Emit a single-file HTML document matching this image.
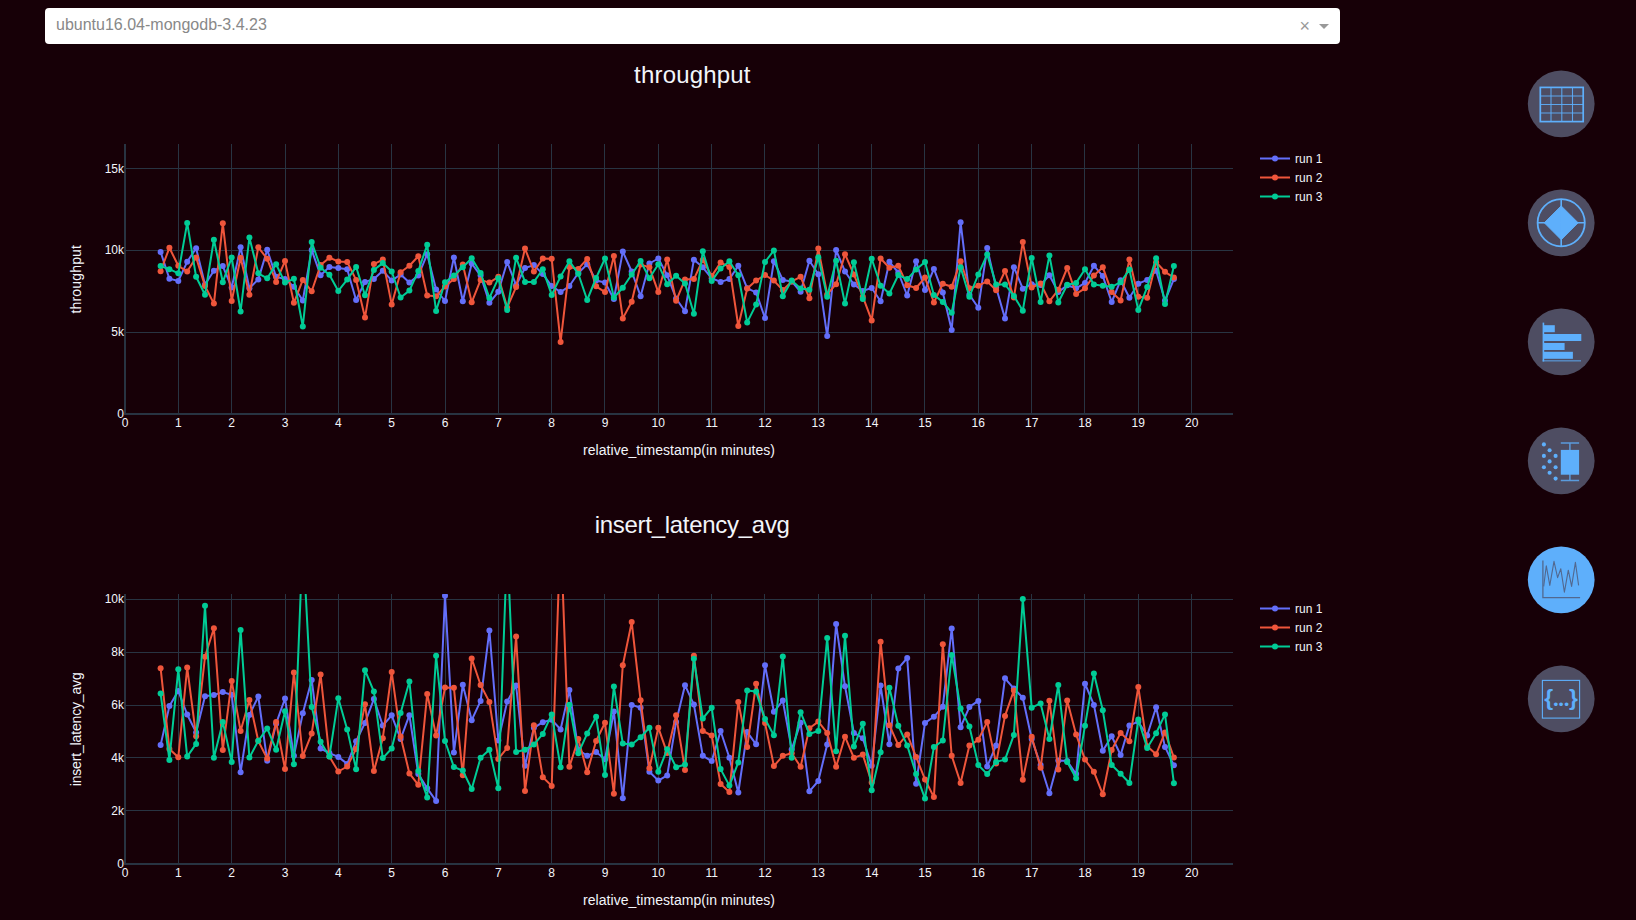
<!DOCTYPE html>
<html><head><meta charset="utf-8"><title>dashboard</title>
<style>
html,body{margin:0;padding:0;background:#170007;width:1636px;height:920px;overflow:hidden}
body{position:relative;font-family:"Liberation Sans",sans-serif}
#dd{position:absolute;left:45px;top:8px;width:1295px;height:35.7px;background:#fff;border-radius:4px;box-sizing:border-box}
#dd .v{position:absolute;left:11px;top:0;line-height:34px;font-size:16px;color:#888;white-space:nowrap}
#dd .x{position:absolute;left:1254.5px;top:0;line-height:37.4px;font-size:18px;color:#999}
#dd .a{position:absolute;left:1274px;top:16px;width:0;height:0;border-left:5px solid transparent;border-right:5px solid transparent;border-top:5px solid #999}
svg{position:absolute;left:0;top:0}
.tk{font-size:12px;fill:#f2f5fa}
.ax{font-size:14px;fill:#f2f5fa}
.tt{font-size:24px;fill:#f2f5fa}
.br{font-size:22.8px;font-weight:bold}
.dots{font-size:13.5px;letter-spacing:0.65px}
</style></head><body>
<div id="dd"><span class="v">ubuntu16.04-mongodb-3.4.23</span><span class="x">×</span><span class="a"></span></div>
<svg width="1636" height="920" viewBox="0 0 1636 920" font-family="Liberation Sans, sans-serif">
<clipPath id="cp1"><rect x="125.0" y="144" width="1108.0" height="270"/></clipPath>
<line x1="178.5" x2="178.5" y1="144" y2="414" stroke="#283442" stroke-width="1" shape-rendering="crispEdges"/>
<line x1="231.5" x2="231.5" y1="144" y2="414" stroke="#283442" stroke-width="1" shape-rendering="crispEdges"/>
<line x1="285.5" x2="285.5" y1="144" y2="414" stroke="#283442" stroke-width="1" shape-rendering="crispEdges"/>
<line x1="338.5" x2="338.5" y1="144" y2="414" stroke="#283442" stroke-width="1" shape-rendering="crispEdges"/>
<line x1="391.5" x2="391.5" y1="144" y2="414" stroke="#283442" stroke-width="1" shape-rendering="crispEdges"/>
<line x1="445.5" x2="445.5" y1="144" y2="414" stroke="#283442" stroke-width="1" shape-rendering="crispEdges"/>
<line x1="498.5" x2="498.5" y1="144" y2="414" stroke="#283442" stroke-width="1" shape-rendering="crispEdges"/>
<line x1="551.5" x2="551.5" y1="144" y2="414" stroke="#283442" stroke-width="1" shape-rendering="crispEdges"/>
<line x1="604.5" x2="604.5" y1="144" y2="414" stroke="#283442" stroke-width="1" shape-rendering="crispEdges"/>
<line x1="658.5" x2="658.5" y1="144" y2="414" stroke="#283442" stroke-width="1" shape-rendering="crispEdges"/>
<line x1="711.5" x2="711.5" y1="144" y2="414" stroke="#283442" stroke-width="1" shape-rendering="crispEdges"/>
<line x1="764.5" x2="764.5" y1="144" y2="414" stroke="#283442" stroke-width="1" shape-rendering="crispEdges"/>
<line x1="818.5" x2="818.5" y1="144" y2="414" stroke="#283442" stroke-width="1" shape-rendering="crispEdges"/>
<line x1="871.5" x2="871.5" y1="144" y2="414" stroke="#283442" stroke-width="1" shape-rendering="crispEdges"/>
<line x1="924.5" x2="924.5" y1="144" y2="414" stroke="#283442" stroke-width="1" shape-rendering="crispEdges"/>
<line x1="978.5" x2="978.5" y1="144" y2="414" stroke="#283442" stroke-width="1" shape-rendering="crispEdges"/>
<line x1="1031.5" x2="1031.5" y1="144" y2="414" stroke="#283442" stroke-width="1" shape-rendering="crispEdges"/>
<line x1="1084.5" x2="1084.5" y1="144" y2="414" stroke="#283442" stroke-width="1" shape-rendering="crispEdges"/>
<line x1="1138.5" x2="1138.5" y1="144" y2="414" stroke="#283442" stroke-width="1" shape-rendering="crispEdges"/>
<line x1="1191.5" x2="1191.5" y1="144" y2="414" stroke="#283442" stroke-width="1" shape-rendering="crispEdges"/>
<line x1="125.0" x2="1233.0" y1="332.17" y2="332.17" stroke="#283442" stroke-width="1" shape-rendering="crispEdges"/>
<line x1="125.0" x2="1233.0" y1="250.33" y2="250.33" stroke="#283442" stroke-width="1" shape-rendering="crispEdges"/>
<line x1="125.0" x2="1233.0" y1="168.50" y2="168.50" stroke="#283442" stroke-width="1" shape-rendering="crispEdges"/>
<line x1="125.0" x2="125.0" y1="144" y2="415" stroke="#283442" stroke-width="2" shape-rendering="crispEdges"/>
<line x1="124.0" x2="1233.0" y1="414" y2="414" stroke="#283442" stroke-width="2" shape-rendering="crispEdges"/>
<g clip-path="url(#cp1)">
<polyline points="160.6,251.9 169.4,278.7 178.3,280.9 187.2,261.8 196.1,248.2 205.0,284.5 213.9,270.7 222.8,266.1 231.7,287.5 240.6,247.3 249.4,288.3 258.3,279.4 267.2,249.8 276.1,276.8 285.0,279.1 293.9,286.8 302.8,300.5 311.7,250.1 320.6,275.3 329.4,266.9 338.3,268.1 347.2,269.2 356.1,300.0 365.0,281.9 373.9,279.1 382.8,270.7 391.7,280.6 400.6,274.5 409.4,282.6 418.3,275.6 427.2,254.2 436.1,289.5 445.0,301.0 453.9,257.4 462.8,301.3 471.7,263.5 480.6,275.6 489.4,302.8 498.3,291.8 507.2,262.0 516.1,285.2 525.0,268.0 533.9,265.1 542.8,274.1 551.7,286.0 560.6,292.1 569.4,286.0 578.3,273.0 587.2,264.3 596.1,280.6 605.0,282.6 613.9,299.0 622.8,251.6 631.7,271.5 640.6,296.2 649.4,263.5 658.3,258.5 667.2,275.3 676.1,298.5 685.0,311.2 693.9,259.7 702.8,267.3 711.7,278.3 720.6,281.9 729.4,279.1 738.3,265.8 747.2,288.3 756.1,292.4 765.0,318.1 773.9,261.2 782.8,279.9 791.7,281.4 800.6,291.8 809.4,260.8 818.3,274.2 827.2,336.1 836.1,250.1 845.0,271.5 853.9,284.5 862.8,290.9 871.7,288.0 880.6,301.3 889.4,261.8 898.3,272.5 907.2,295.5 916.1,261.2 925.0,290.1 933.9,268.9 942.8,292.6 951.7,330.0 960.6,222.3 969.4,294.7 978.3,307.7 987.2,248.1 996.1,287.5 1005.0,318.4 1013.9,267.2 1022.8,288.7 1031.7,284.2 1040.6,284.9 1049.4,275.3 1058.3,292.1 1067.2,285.2 1076.1,288.3 1085.0,282.9 1093.9,265.7 1102.8,276.1 1111.7,302.0 1120.6,280.3 1129.4,297.8 1138.3,283.7 1147.2,279.9 1156.1,270.7 1165.0,300.5 1173.9,279.1" fill="none" stroke="#636efa" stroke-width="2" stroke-linejoin="round"/>
<g fill="#636efa"><circle cx="160.6" cy="251.9" r="3"/><circle cx="169.4" cy="278.7" r="3"/><circle cx="178.3" cy="280.9" r="3"/><circle cx="187.2" cy="261.8" r="3"/><circle cx="196.1" cy="248.2" r="3"/><circle cx="205.0" cy="284.5" r="3"/><circle cx="213.9" cy="270.7" r="3"/><circle cx="222.8" cy="266.1" r="3"/><circle cx="231.7" cy="287.5" r="3"/><circle cx="240.6" cy="247.3" r="3"/><circle cx="249.4" cy="288.3" r="3"/><circle cx="258.3" cy="279.4" r="3"/><circle cx="267.2" cy="249.8" r="3"/><circle cx="276.1" cy="276.8" r="3"/><circle cx="285.0" cy="279.1" r="3"/><circle cx="293.9" cy="286.8" r="3"/><circle cx="302.8" cy="300.5" r="3"/><circle cx="311.7" cy="250.1" r="3"/><circle cx="320.6" cy="275.3" r="3"/><circle cx="329.4" cy="266.9" r="3"/><circle cx="338.3" cy="268.1" r="3"/><circle cx="347.2" cy="269.2" r="3"/><circle cx="356.1" cy="300.0" r="3"/><circle cx="365.0" cy="281.9" r="3"/><circle cx="373.9" cy="279.1" r="3"/><circle cx="382.8" cy="270.7" r="3"/><circle cx="391.7" cy="280.6" r="3"/><circle cx="400.6" cy="274.5" r="3"/><circle cx="409.4" cy="282.6" r="3"/><circle cx="418.3" cy="275.6" r="3"/><circle cx="427.2" cy="254.2" r="3"/><circle cx="436.1" cy="289.5" r="3"/><circle cx="445.0" cy="301.0" r="3"/><circle cx="453.9" cy="257.4" r="3"/><circle cx="462.8" cy="301.3" r="3"/><circle cx="471.7" cy="263.5" r="3"/><circle cx="480.6" cy="275.6" r="3"/><circle cx="489.4" cy="302.8" r="3"/><circle cx="498.3" cy="291.8" r="3"/><circle cx="507.2" cy="262.0" r="3"/><circle cx="516.1" cy="285.2" r="3"/><circle cx="525.0" cy="268.0" r="3"/><circle cx="533.9" cy="265.1" r="3"/><circle cx="542.8" cy="274.1" r="3"/><circle cx="551.7" cy="286.0" r="3"/><circle cx="560.6" cy="292.1" r="3"/><circle cx="569.4" cy="286.0" r="3"/><circle cx="578.3" cy="273.0" r="3"/><circle cx="587.2" cy="264.3" r="3"/><circle cx="596.1" cy="280.6" r="3"/><circle cx="605.0" cy="282.6" r="3"/><circle cx="613.9" cy="299.0" r="3"/><circle cx="622.8" cy="251.6" r="3"/><circle cx="631.7" cy="271.5" r="3"/><circle cx="640.6" cy="296.2" r="3"/><circle cx="649.4" cy="263.5" r="3"/><circle cx="658.3" cy="258.5" r="3"/><circle cx="667.2" cy="275.3" r="3"/><circle cx="676.1" cy="298.5" r="3"/><circle cx="685.0" cy="311.2" r="3"/><circle cx="693.9" cy="259.7" r="3"/><circle cx="702.8" cy="267.3" r="3"/><circle cx="711.7" cy="278.3" r="3"/><circle cx="720.6" cy="281.9" r="3"/><circle cx="729.4" cy="279.1" r="3"/><circle cx="738.3" cy="265.8" r="3"/><circle cx="747.2" cy="288.3" r="3"/><circle cx="756.1" cy="292.4" r="3"/><circle cx="765.0" cy="318.1" r="3"/><circle cx="773.9" cy="261.2" r="3"/><circle cx="782.8" cy="279.9" r="3"/><circle cx="791.7" cy="281.4" r="3"/><circle cx="800.6" cy="291.8" r="3"/><circle cx="809.4" cy="260.8" r="3"/><circle cx="818.3" cy="274.2" r="3"/><circle cx="827.2" cy="336.1" r="3"/><circle cx="836.1" cy="250.1" r="3"/><circle cx="845.0" cy="271.5" r="3"/><circle cx="853.9" cy="284.5" r="3"/><circle cx="862.8" cy="290.9" r="3"/><circle cx="871.7" cy="288.0" r="3"/><circle cx="880.6" cy="301.3" r="3"/><circle cx="889.4" cy="261.8" r="3"/><circle cx="898.3" cy="272.5" r="3"/><circle cx="907.2" cy="295.5" r="3"/><circle cx="916.1" cy="261.2" r="3"/><circle cx="925.0" cy="290.1" r="3"/><circle cx="933.9" cy="268.9" r="3"/><circle cx="942.8" cy="292.6" r="3"/><circle cx="951.7" cy="330.0" r="3"/><circle cx="960.6" cy="222.3" r="3"/><circle cx="969.4" cy="294.7" r="3"/><circle cx="978.3" cy="307.7" r="3"/><circle cx="987.2" cy="248.1" r="3"/><circle cx="996.1" cy="287.5" r="3"/><circle cx="1005.0" cy="318.4" r="3"/><circle cx="1013.9" cy="267.2" r="3"/><circle cx="1022.8" cy="288.7" r="3"/><circle cx="1031.7" cy="284.2" r="3"/><circle cx="1040.6" cy="284.9" r="3"/><circle cx="1049.4" cy="275.3" r="3"/><circle cx="1058.3" cy="292.1" r="3"/><circle cx="1067.2" cy="285.2" r="3"/><circle cx="1076.1" cy="288.3" r="3"/><circle cx="1085.0" cy="282.9" r="3"/><circle cx="1093.9" cy="265.7" r="3"/><circle cx="1102.8" cy="276.1" r="3"/><circle cx="1111.7" cy="302.0" r="3"/><circle cx="1120.6" cy="280.3" r="3"/><circle cx="1129.4" cy="297.8" r="3"/><circle cx="1138.3" cy="283.7" r="3"/><circle cx="1147.2" cy="279.9" r="3"/><circle cx="1156.1" cy="270.7" r="3"/><circle cx="1165.0" cy="300.5" r="3"/><circle cx="1173.9" cy="279.1" r="3"/></g>
<polyline points="160.6,271.2 169.4,247.8 178.3,265.8 187.2,271.5 196.1,257.4 205.0,286.0 213.9,303.6 222.8,223.3 231.7,301.0 240.6,257.7 249.4,294.7 258.3,247.3 267.2,258.8 276.1,281.9 285.0,261.1 293.9,302.8 302.8,279.9 311.7,291.3 320.6,265.1 329.4,257.7 338.3,261.5 347.2,262.0 356.1,279.9 365.0,317.6 373.9,264.1 382.8,259.6 391.7,304.6 400.6,272.2 409.4,265.7 418.3,256.2 427.2,295.5 436.1,296.2 445.0,286.4 453.9,279.1 462.8,264.6 471.7,302.3 480.6,279.9 489.4,282.6 498.3,276.8 507.2,307.4 516.1,287.1 525.0,248.6 533.9,271.5 542.8,258.5 551.7,258.8 560.6,342.1 569.4,266.9 578.3,268.9 587.2,258.9 596.1,286.3 605.0,292.1 613.9,255.9 622.8,318.4 631.7,301.7 640.6,264.6 649.4,267.3 658.3,292.1 667.2,259.6 676.1,300.8 685.0,279.6 693.9,279.1 702.8,260.0 711.7,276.1 720.6,262.6 729.4,266.9 738.3,326.0 747.2,288.6 756.1,280.6 765.0,275.0 773.9,280.6 782.8,290.1 791.7,281.4 800.6,276.8 809.4,298.2 818.3,248.6 827.2,294.4 836.1,284.2 845.0,254.2 853.9,274.5 862.8,296.7 871.7,320.4 880.6,258.5 889.4,267.7 898.3,265.7 907.2,285.2 916.1,288.0 925.0,277.6 933.9,302.5 942.8,283.7 951.7,286.8 960.6,261.2 969.4,288.3 978.3,285.7 987.2,281.4 996.1,290.3 1005.0,271.0 1013.9,297.5 1022.8,242.1 1031.7,287.5 1040.6,283.4 1049.4,301.3 1058.3,289.8 1067.2,268.0 1076.1,293.9 1085.0,288.3 1093.9,275.6 1102.8,267.3 1111.7,292.1 1120.6,300.5 1129.4,259.6 1138.3,296.7 1147.2,297.8 1156.1,262.3 1165.0,271.8 1173.9,277.6" fill="none" stroke="#ef553b" stroke-width="2" stroke-linejoin="round"/>
<g fill="#ef553b"><circle cx="160.6" cy="271.2" r="3"/><circle cx="169.4" cy="247.8" r="3"/><circle cx="178.3" cy="265.8" r="3"/><circle cx="187.2" cy="271.5" r="3"/><circle cx="196.1" cy="257.4" r="3"/><circle cx="205.0" cy="286.0" r="3"/><circle cx="213.9" cy="303.6" r="3"/><circle cx="222.8" cy="223.3" r="3"/><circle cx="231.7" cy="301.0" r="3"/><circle cx="240.6" cy="257.7" r="3"/><circle cx="249.4" cy="294.7" r="3"/><circle cx="258.3" cy="247.3" r="3"/><circle cx="267.2" cy="258.8" r="3"/><circle cx="276.1" cy="281.9" r="3"/><circle cx="285.0" cy="261.1" r="3"/><circle cx="293.9" cy="302.8" r="3"/><circle cx="302.8" cy="279.9" r="3"/><circle cx="311.7" cy="291.3" r="3"/><circle cx="320.6" cy="265.1" r="3"/><circle cx="329.4" cy="257.7" r="3"/><circle cx="338.3" cy="261.5" r="3"/><circle cx="347.2" cy="262.0" r="3"/><circle cx="356.1" cy="279.9" r="3"/><circle cx="365.0" cy="317.6" r="3"/><circle cx="373.9" cy="264.1" r="3"/><circle cx="382.8" cy="259.6" r="3"/><circle cx="391.7" cy="304.6" r="3"/><circle cx="400.6" cy="272.2" r="3"/><circle cx="409.4" cy="265.7" r="3"/><circle cx="418.3" cy="256.2" r="3"/><circle cx="427.2" cy="295.5" r="3"/><circle cx="436.1" cy="296.2" r="3"/><circle cx="445.0" cy="286.4" r="3"/><circle cx="453.9" cy="279.1" r="3"/><circle cx="462.8" cy="264.6" r="3"/><circle cx="471.7" cy="302.3" r="3"/><circle cx="480.6" cy="279.9" r="3"/><circle cx="489.4" cy="282.6" r="3"/><circle cx="498.3" cy="276.8" r="3"/><circle cx="507.2" cy="307.4" r="3"/><circle cx="516.1" cy="287.1" r="3"/><circle cx="525.0" cy="248.6" r="3"/><circle cx="533.9" cy="271.5" r="3"/><circle cx="542.8" cy="258.5" r="3"/><circle cx="551.7" cy="258.8" r="3"/><circle cx="560.6" cy="342.1" r="3"/><circle cx="569.4" cy="266.9" r="3"/><circle cx="578.3" cy="268.9" r="3"/><circle cx="587.2" cy="258.9" r="3"/><circle cx="596.1" cy="286.3" r="3"/><circle cx="605.0" cy="292.1" r="3"/><circle cx="613.9" cy="255.9" r="3"/><circle cx="622.8" cy="318.4" r="3"/><circle cx="631.7" cy="301.7" r="3"/><circle cx="640.6" cy="264.6" r="3"/><circle cx="649.4" cy="267.3" r="3"/><circle cx="658.3" cy="292.1" r="3"/><circle cx="667.2" cy="259.6" r="3"/><circle cx="676.1" cy="300.8" r="3"/><circle cx="685.0" cy="279.6" r="3"/><circle cx="693.9" cy="279.1" r="3"/><circle cx="702.8" cy="260.0" r="3"/><circle cx="711.7" cy="276.1" r="3"/><circle cx="720.6" cy="262.6" r="3"/><circle cx="729.4" cy="266.9" r="3"/><circle cx="738.3" cy="326.0" r="3"/><circle cx="747.2" cy="288.6" r="3"/><circle cx="756.1" cy="280.6" r="3"/><circle cx="765.0" cy="275.0" r="3"/><circle cx="773.9" cy="280.6" r="3"/><circle cx="782.8" cy="290.1" r="3"/><circle cx="791.7" cy="281.4" r="3"/><circle cx="800.6" cy="276.8" r="3"/><circle cx="809.4" cy="298.2" r="3"/><circle cx="818.3" cy="248.6" r="3"/><circle cx="827.2" cy="294.4" r="3"/><circle cx="836.1" cy="284.2" r="3"/><circle cx="845.0" cy="254.2" r="3"/><circle cx="853.9" cy="274.5" r="3"/><circle cx="862.8" cy="296.7" r="3"/><circle cx="871.7" cy="320.4" r="3"/><circle cx="880.6" cy="258.5" r="3"/><circle cx="889.4" cy="267.7" r="3"/><circle cx="898.3" cy="265.7" r="3"/><circle cx="907.2" cy="285.2" r="3"/><circle cx="916.1" cy="288.0" r="3"/><circle cx="925.0" cy="277.6" r="3"/><circle cx="933.9" cy="302.5" r="3"/><circle cx="942.8" cy="283.7" r="3"/><circle cx="951.7" cy="286.8" r="3"/><circle cx="960.6" cy="261.2" r="3"/><circle cx="969.4" cy="288.3" r="3"/><circle cx="978.3" cy="285.7" r="3"/><circle cx="987.2" cy="281.4" r="3"/><circle cx="996.1" cy="290.3" r="3"/><circle cx="1005.0" cy="271.0" r="3"/><circle cx="1013.9" cy="297.5" r="3"/><circle cx="1022.8" cy="242.1" r="3"/><circle cx="1031.7" cy="287.5" r="3"/><circle cx="1040.6" cy="283.4" r="3"/><circle cx="1049.4" cy="301.3" r="3"/><circle cx="1058.3" cy="289.8" r="3"/><circle cx="1067.2" cy="268.0" r="3"/><circle cx="1076.1" cy="293.9" r="3"/><circle cx="1085.0" cy="288.3" r="3"/><circle cx="1093.9" cy="275.6" r="3"/><circle cx="1102.8" cy="267.3" r="3"/><circle cx="1111.7" cy="292.1" r="3"/><circle cx="1120.6" cy="300.5" r="3"/><circle cx="1129.4" cy="259.6" r="3"/><circle cx="1138.3" cy="296.7" r="3"/><circle cx="1147.2" cy="297.8" r="3"/><circle cx="1156.1" cy="262.3" r="3"/><circle cx="1165.0" cy="271.8" r="3"/><circle cx="1173.9" cy="277.6" r="3"/></g>
<polyline points="160.6,266.1 169.4,269.2 178.3,273.3 187.2,222.9 196.1,276.8 205.0,294.7 213.9,239.7 222.8,282.2 231.7,257.4 240.6,311.5 249.4,237.5 258.3,273.3 267.2,278.3 276.1,264.3 285.0,282.6 293.9,278.8 302.8,326.5 311.7,242.1 320.6,267.7 329.4,274.8 338.3,290.9 347.2,279.6 356.1,266.9 365.0,295.2 373.9,269.9 382.8,263.1 391.7,271.5 400.6,297.5 409.4,290.6 418.3,271.0 427.2,244.7 436.1,310.9 445.0,282.2 453.9,275.6 462.8,267.3 471.7,258.2 480.6,273.0 489.4,297.9 498.3,278.3 507.2,310.1 516.1,257.7 525.0,281.9 533.9,281.9 542.8,269.2 551.7,294.9 560.6,276.5 569.4,261.2 578.3,273.8 587.2,300.0 596.1,278.0 605.0,258.5 613.9,297.5 622.8,287.8 631.7,274.5 640.6,261.1 649.4,278.3 658.3,264.3 667.2,284.2 676.1,275.8 685.0,283.4 693.9,313.8 702.8,251.3 711.7,281.1 720.6,268.4 729.4,261.2 738.3,275.3 747.2,322.4 756.1,304.6 765.0,262.0 773.9,250.4 782.8,296.2 791.7,280.6 800.6,288.6 809.4,289.8 818.3,257.3 827.2,296.7 836.1,260.8 845.0,303.6 853.9,262.3 862.8,299.0 871.7,258.8 880.6,285.7 889.4,293.6 898.3,275.0 907.2,279.1 916.1,269.6 925.0,262.0 933.9,294.9 942.8,302.0 951.7,312.7 960.6,267.3 969.4,296.7 978.3,274.5 987.2,254.4 996.1,284.5 1005.0,284.5 1013.9,295.9 1022.8,310.7 1031.7,258.0 1040.6,302.0 1049.4,255.4 1058.3,302.5 1067.2,284.8 1076.1,282.9 1085.0,269.2 1093.9,284.5 1102.8,285.7 1111.7,286.8 1120.6,282.2 1129.4,269.6 1138.3,310.1 1147.2,287.1 1156.1,258.2 1165.0,304.0 1173.9,266.1" fill="none" stroke="#00cc96" stroke-width="2" stroke-linejoin="round"/>
<g fill="#00cc96"><circle cx="160.6" cy="266.1" r="3"/><circle cx="169.4" cy="269.2" r="3"/><circle cx="178.3" cy="273.3" r="3"/><circle cx="187.2" cy="222.9" r="3"/><circle cx="196.1" cy="276.8" r="3"/><circle cx="205.0" cy="294.7" r="3"/><circle cx="213.9" cy="239.7" r="3"/><circle cx="222.8" cy="282.2" r="3"/><circle cx="231.7" cy="257.4" r="3"/><circle cx="240.6" cy="311.5" r="3"/><circle cx="249.4" cy="237.5" r="3"/><circle cx="258.3" cy="273.3" r="3"/><circle cx="267.2" cy="278.3" r="3"/><circle cx="276.1" cy="264.3" r="3"/><circle cx="285.0" cy="282.6" r="3"/><circle cx="293.9" cy="278.8" r="3"/><circle cx="302.8" cy="326.5" r="3"/><circle cx="311.7" cy="242.1" r="3"/><circle cx="320.6" cy="267.7" r="3"/><circle cx="329.4" cy="274.8" r="3"/><circle cx="338.3" cy="290.9" r="3"/><circle cx="347.2" cy="279.6" r="3"/><circle cx="356.1" cy="266.9" r="3"/><circle cx="365.0" cy="295.2" r="3"/><circle cx="373.9" cy="269.9" r="3"/><circle cx="382.8" cy="263.1" r="3"/><circle cx="391.7" cy="271.5" r="3"/><circle cx="400.6" cy="297.5" r="3"/><circle cx="409.4" cy="290.6" r="3"/><circle cx="418.3" cy="271.0" r="3"/><circle cx="427.2" cy="244.7" r="3"/><circle cx="436.1" cy="310.9" r="3"/><circle cx="445.0" cy="282.2" r="3"/><circle cx="453.9" cy="275.6" r="3"/><circle cx="462.8" cy="267.3" r="3"/><circle cx="471.7" cy="258.2" r="3"/><circle cx="480.6" cy="273.0" r="3"/><circle cx="489.4" cy="297.9" r="3"/><circle cx="498.3" cy="278.3" r="3"/><circle cx="507.2" cy="310.1" r="3"/><circle cx="516.1" cy="257.7" r="3"/><circle cx="525.0" cy="281.9" r="3"/><circle cx="533.9" cy="281.9" r="3"/><circle cx="542.8" cy="269.2" r="3"/><circle cx="551.7" cy="294.9" r="3"/><circle cx="560.6" cy="276.5" r="3"/><circle cx="569.4" cy="261.2" r="3"/><circle cx="578.3" cy="273.8" r="3"/><circle cx="587.2" cy="300.0" r="3"/><circle cx="596.1" cy="278.0" r="3"/><circle cx="605.0" cy="258.5" r="3"/><circle cx="613.9" cy="297.5" r="3"/><circle cx="622.8" cy="287.8" r="3"/><circle cx="631.7" cy="274.5" r="3"/><circle cx="640.6" cy="261.1" r="3"/><circle cx="649.4" cy="278.3" r="3"/><circle cx="658.3" cy="264.3" r="3"/><circle cx="667.2" cy="284.2" r="3"/><circle cx="676.1" cy="275.8" r="3"/><circle cx="685.0" cy="283.4" r="3"/><circle cx="693.9" cy="313.8" r="3"/><circle cx="702.8" cy="251.3" r="3"/><circle cx="711.7" cy="281.1" r="3"/><circle cx="720.6" cy="268.4" r="3"/><circle cx="729.4" cy="261.2" r="3"/><circle cx="738.3" cy="275.3" r="3"/><circle cx="747.2" cy="322.4" r="3"/><circle cx="756.1" cy="304.6" r="3"/><circle cx="765.0" cy="262.0" r="3"/><circle cx="773.9" cy="250.4" r="3"/><circle cx="782.8" cy="296.2" r="3"/><circle cx="791.7" cy="280.6" r="3"/><circle cx="800.6" cy="288.6" r="3"/><circle cx="809.4" cy="289.8" r="3"/><circle cx="818.3" cy="257.3" r="3"/><circle cx="827.2" cy="296.7" r="3"/><circle cx="836.1" cy="260.8" r="3"/><circle cx="845.0" cy="303.6" r="3"/><circle cx="853.9" cy="262.3" r="3"/><circle cx="862.8" cy="299.0" r="3"/><circle cx="871.7" cy="258.8" r="3"/><circle cx="880.6" cy="285.7" r="3"/><circle cx="889.4" cy="293.6" r="3"/><circle cx="898.3" cy="275.0" r="3"/><circle cx="907.2" cy="279.1" r="3"/><circle cx="916.1" cy="269.6" r="3"/><circle cx="925.0" cy="262.0" r="3"/><circle cx="933.9" cy="294.9" r="3"/><circle cx="942.8" cy="302.0" r="3"/><circle cx="951.7" cy="312.7" r="3"/><circle cx="960.6" cy="267.3" r="3"/><circle cx="969.4" cy="296.7" r="3"/><circle cx="978.3" cy="274.5" r="3"/><circle cx="987.2" cy="254.4" r="3"/><circle cx="996.1" cy="284.5" r="3"/><circle cx="1005.0" cy="284.5" r="3"/><circle cx="1013.9" cy="295.9" r="3"/><circle cx="1022.8" cy="310.7" r="3"/><circle cx="1031.7" cy="258.0" r="3"/><circle cx="1040.6" cy="302.0" r="3"/><circle cx="1049.4" cy="255.4" r="3"/><circle cx="1058.3" cy="302.5" r="3"/><circle cx="1067.2" cy="284.8" r="3"/><circle cx="1076.1" cy="282.9" r="3"/><circle cx="1085.0" cy="269.2" r="3"/><circle cx="1093.9" cy="284.5" r="3"/><circle cx="1102.8" cy="285.7" r="3"/><circle cx="1111.7" cy="286.8" r="3"/><circle cx="1120.6" cy="282.2" r="3"/><circle cx="1129.4" cy="269.6" r="3"/><circle cx="1138.3" cy="310.1" r="3"/><circle cx="1147.2" cy="287.1" r="3"/><circle cx="1156.1" cy="258.2" r="3"/><circle cx="1165.0" cy="304.0" r="3"/><circle cx="1173.9" cy="266.1" r="3"/></g>
</g>
<text x="125.0" y="427.2" text-anchor="middle" class="tk">0</text>
<text x="178.3" y="427.2" text-anchor="middle" class="tk">1</text>
<text x="231.7" y="427.2" text-anchor="middle" class="tk">2</text>
<text x="285.0" y="427.2" text-anchor="middle" class="tk">3</text>
<text x="338.3" y="427.2" text-anchor="middle" class="tk">4</text>
<text x="391.7" y="427.2" text-anchor="middle" class="tk">5</text>
<text x="445.0" y="427.2" text-anchor="middle" class="tk">6</text>
<text x="498.3" y="427.2" text-anchor="middle" class="tk">7</text>
<text x="551.7" y="427.2" text-anchor="middle" class="tk">8</text>
<text x="605.0" y="427.2" text-anchor="middle" class="tk">9</text>
<text x="658.3" y="427.2" text-anchor="middle" class="tk">10</text>
<text x="711.7" y="427.2" text-anchor="middle" class="tk">11</text>
<text x="765.0" y="427.2" text-anchor="middle" class="tk">12</text>
<text x="818.3" y="427.2" text-anchor="middle" class="tk">13</text>
<text x="871.7" y="427.2" text-anchor="middle" class="tk">14</text>
<text x="925.0" y="427.2" text-anchor="middle" class="tk">15</text>
<text x="978.3" y="427.2" text-anchor="middle" class="tk">16</text>
<text x="1031.7" y="427.2" text-anchor="middle" class="tk">17</text>
<text x="1085.0" y="427.2" text-anchor="middle" class="tk">18</text>
<text x="1138.3" y="427.2" text-anchor="middle" class="tk">19</text>
<text x="1191.7" y="427.2" text-anchor="middle" class="tk">20</text>
<text x="124" y="418.0" text-anchor="end" class="tk">0</text>
<text x="124" y="336.2" text-anchor="end" class="tk">5k</text>
<text x="124" y="254.3" text-anchor="end" class="tk">10k</text>
<text x="124" y="172.5" text-anchor="end" class="tk">15k</text>
<text x="583" y="455" class="ax" textLength="192" lengthAdjust="spacing">relative_timestamp(in minutes)</text>
<text transform="translate(80.6,313.55) rotate(-90)" class="ax" textLength="68.5" lengthAdjust="spacing">throughput</text>
<text x="634.0999999999999" y="83" class="tt" textLength="116.4" lengthAdjust="spacing">throughput</text>
<line x1="1260" x2="1290" y1="158.5" y2="158.5" stroke="#636efa" stroke-width="2"/>
<circle cx="1275" cy="158.5" r="3" fill="#636efa"/>
<text x="1295" y="162.7" class="tk">run 1</text>
<line x1="1260" x2="1290" y1="177.5" y2="177.5" stroke="#ef553b" stroke-width="2"/>
<circle cx="1275" cy="177.5" r="3" fill="#ef553b"/>
<text x="1295" y="181.7" class="tk">run 2</text>
<line x1="1260" x2="1290" y1="196.5" y2="196.5" stroke="#00cc96" stroke-width="2"/>
<circle cx="1275" cy="196.5" r="3" fill="#00cc96"/>
<text x="1295" y="200.7" class="tk">run 3</text>
<clipPath id="cp2"><rect x="125.0" y="594" width="1108.0" height="270"/></clipPath>
<line x1="178.5" x2="178.5" y1="594" y2="864" stroke="#283442" stroke-width="1" shape-rendering="crispEdges"/>
<line x1="231.5" x2="231.5" y1="594" y2="864" stroke="#283442" stroke-width="1" shape-rendering="crispEdges"/>
<line x1="285.5" x2="285.5" y1="594" y2="864" stroke="#283442" stroke-width="1" shape-rendering="crispEdges"/>
<line x1="338.5" x2="338.5" y1="594" y2="864" stroke="#283442" stroke-width="1" shape-rendering="crispEdges"/>
<line x1="391.5" x2="391.5" y1="594" y2="864" stroke="#283442" stroke-width="1" shape-rendering="crispEdges"/>
<line x1="445.5" x2="445.5" y1="594" y2="864" stroke="#283442" stroke-width="1" shape-rendering="crispEdges"/>
<line x1="498.5" x2="498.5" y1="594" y2="864" stroke="#283442" stroke-width="1" shape-rendering="crispEdges"/>
<line x1="551.5" x2="551.5" y1="594" y2="864" stroke="#283442" stroke-width="1" shape-rendering="crispEdges"/>
<line x1="604.5" x2="604.5" y1="594" y2="864" stroke="#283442" stroke-width="1" shape-rendering="crispEdges"/>
<line x1="658.5" x2="658.5" y1="594" y2="864" stroke="#283442" stroke-width="1" shape-rendering="crispEdges"/>
<line x1="711.5" x2="711.5" y1="594" y2="864" stroke="#283442" stroke-width="1" shape-rendering="crispEdges"/>
<line x1="764.5" x2="764.5" y1="594" y2="864" stroke="#283442" stroke-width="1" shape-rendering="crispEdges"/>
<line x1="818.5" x2="818.5" y1="594" y2="864" stroke="#283442" stroke-width="1" shape-rendering="crispEdges"/>
<line x1="871.5" x2="871.5" y1="594" y2="864" stroke="#283442" stroke-width="1" shape-rendering="crispEdges"/>
<line x1="924.5" x2="924.5" y1="594" y2="864" stroke="#283442" stroke-width="1" shape-rendering="crispEdges"/>
<line x1="978.5" x2="978.5" y1="594" y2="864" stroke="#283442" stroke-width="1" shape-rendering="crispEdges"/>
<line x1="1031.5" x2="1031.5" y1="594" y2="864" stroke="#283442" stroke-width="1" shape-rendering="crispEdges"/>
<line x1="1084.5" x2="1084.5" y1="594" y2="864" stroke="#283442" stroke-width="1" shape-rendering="crispEdges"/>
<line x1="1138.5" x2="1138.5" y1="594" y2="864" stroke="#283442" stroke-width="1" shape-rendering="crispEdges"/>
<line x1="1191.5" x2="1191.5" y1="594" y2="864" stroke="#283442" stroke-width="1" shape-rendering="crispEdges"/>
<line x1="125.0" x2="1233.0" y1="810.82" y2="810.82" stroke="#283442" stroke-width="1" shape-rendering="crispEdges"/>
<line x1="125.0" x2="1233.0" y1="757.94" y2="757.94" stroke="#283442" stroke-width="1" shape-rendering="crispEdges"/>
<line x1="125.0" x2="1233.0" y1="705.06" y2="705.06" stroke="#283442" stroke-width="1" shape-rendering="crispEdges"/>
<line x1="125.0" x2="1233.0" y1="652.18" y2="652.18" stroke="#283442" stroke-width="1" shape-rendering="crispEdges"/>
<line x1="125.0" x2="1233.0" y1="599.30" y2="599.30" stroke="#283442" stroke-width="1" shape-rendering="crispEdges"/>
<line x1="125.0" x2="125.0" y1="594" y2="865" stroke="#283442" stroke-width="2" shape-rendering="crispEdges"/>
<line x1="124.0" x2="1233.0" y1="864" y2="864" stroke="#283442" stroke-width="2" shape-rendering="crispEdges"/>
<g clip-path="url(#cp2)">
<polyline points="160.6,745.1 169.4,706.1 178.3,690.9 187.2,714.5 196.1,732.4 205.0,696.2 213.9,695.0 222.8,692.1 231.7,694.7 240.6,772.3 249.4,715.0 258.3,696.5 267.2,760.8 276.1,723.7 285.0,698.5 293.9,755.8 302.8,713.2 311.7,679.9 320.6,748.5 329.4,753.1 338.3,756.9 347.2,763.9 356.1,741.3 365.0,722.9 373.9,699.0 382.8,725.5 391.7,715.3 400.6,739.0 409.4,715.2 418.3,774.1 427.2,788.3 436.1,800.9 445.0,595.8 453.9,752.4 462.8,684.7 471.7,720.2 480.6,700.9 489.4,630.5 498.3,740.5 507.2,701.6 516.1,685.5 525.0,765.7 533.9,727.8 542.8,722.2 551.7,719.7 560.6,729.5 569.4,690.1 578.3,749.7 587.2,755.8 596.1,752.0 605.0,759.2 613.9,711.5 622.8,798.3 631.7,704.9 640.6,707.7 649.4,771.8 658.3,780.6 667.2,775.4 676.1,721.9 685.0,685.2 693.9,704.6 702.8,755.8 711.7,761.1 720.6,731.0 729.4,757.8 738.3,792.5 747.2,732.1 756.1,744.3 765.0,665.2 773.9,711.8 782.8,700.5 791.7,749.4 800.6,722.8 809.4,791.3 818.3,781.0 827.2,744.6 836.1,623.9 845.0,686.3 853.9,732.9 862.8,738.2 871.7,765.7 880.6,685.5 889.4,744.3 898.3,668.4 907.2,658.0 916.1,783.8 925.0,722.9 933.9,716.8 942.8,706.7 951.7,628.5 960.6,727.2 969.4,706.9 978.3,700.9 987.2,766.5 996.1,745.4 1005.0,678.3 1013.9,688.6 1022.8,697.7 1031.7,739.0 1040.6,765.0 1049.4,793.2 1058.3,760.4 1067.2,761.1 1076.1,774.1 1085.0,683.7 1093.9,704.9 1102.8,750.8 1111.7,736.2 1120.6,755.0 1129.4,725.4 1138.3,721.7 1147.2,735.5 1156.1,707.2 1165.0,746.9 1173.9,765.3" fill="none" stroke="#636efa" stroke-width="2" stroke-linejoin="round"/>
<g fill="#636efa"><circle cx="160.6" cy="745.1" r="3"/><circle cx="169.4" cy="706.1" r="3"/><circle cx="178.3" cy="690.9" r="3"/><circle cx="187.2" cy="714.5" r="3"/><circle cx="196.1" cy="732.4" r="3"/><circle cx="205.0" cy="696.2" r="3"/><circle cx="213.9" cy="695.0" r="3"/><circle cx="222.8" cy="692.1" r="3"/><circle cx="231.7" cy="694.7" r="3"/><circle cx="240.6" cy="772.3" r="3"/><circle cx="249.4" cy="715.0" r="3"/><circle cx="258.3" cy="696.5" r="3"/><circle cx="267.2" cy="760.8" r="3"/><circle cx="276.1" cy="723.7" r="3"/><circle cx="285.0" cy="698.5" r="3"/><circle cx="293.9" cy="755.8" r="3"/><circle cx="302.8" cy="713.2" r="3"/><circle cx="311.7" cy="679.9" r="3"/><circle cx="320.6" cy="748.5" r="3"/><circle cx="329.4" cy="753.1" r="3"/><circle cx="338.3" cy="756.9" r="3"/><circle cx="347.2" cy="763.9" r="3"/><circle cx="356.1" cy="741.3" r="3"/><circle cx="365.0" cy="722.9" r="3"/><circle cx="373.9" cy="699.0" r="3"/><circle cx="382.8" cy="725.5" r="3"/><circle cx="391.7" cy="715.3" r="3"/><circle cx="400.6" cy="739.0" r="3"/><circle cx="409.4" cy="715.2" r="3"/><circle cx="418.3" cy="774.1" r="3"/><circle cx="427.2" cy="788.3" r="3"/><circle cx="436.1" cy="800.9" r="3"/><circle cx="445.0" cy="595.8" r="3"/><circle cx="453.9" cy="752.4" r="3"/><circle cx="462.8" cy="684.7" r="3"/><circle cx="471.7" cy="720.2" r="3"/><circle cx="480.6" cy="700.9" r="3"/><circle cx="489.4" cy="630.5" r="3"/><circle cx="498.3" cy="740.5" r="3"/><circle cx="507.2" cy="701.6" r="3"/><circle cx="516.1" cy="685.5" r="3"/><circle cx="525.0" cy="765.7" r="3"/><circle cx="533.9" cy="727.8" r="3"/><circle cx="542.8" cy="722.2" r="3"/><circle cx="551.7" cy="719.7" r="3"/><circle cx="560.6" cy="729.5" r="3"/><circle cx="569.4" cy="690.1" r="3"/><circle cx="578.3" cy="749.7" r="3"/><circle cx="587.2" cy="755.8" r="3"/><circle cx="596.1" cy="752.0" r="3"/><circle cx="605.0" cy="759.2" r="3"/><circle cx="613.9" cy="711.5" r="3"/><circle cx="622.8" cy="798.3" r="3"/><circle cx="631.7" cy="704.9" r="3"/><circle cx="640.6" cy="707.7" r="3"/><circle cx="649.4" cy="771.8" r="3"/><circle cx="658.3" cy="780.6" r="3"/><circle cx="667.2" cy="775.4" r="3"/><circle cx="676.1" cy="721.9" r="3"/><circle cx="685.0" cy="685.2" r="3"/><circle cx="693.9" cy="704.6" r="3"/><circle cx="702.8" cy="755.8" r="3"/><circle cx="711.7" cy="761.1" r="3"/><circle cx="720.6" cy="731.0" r="3"/><circle cx="729.4" cy="757.8" r="3"/><circle cx="738.3" cy="792.5" r="3"/><circle cx="747.2" cy="732.1" r="3"/><circle cx="756.1" cy="744.3" r="3"/><circle cx="765.0" cy="665.2" r="3"/><circle cx="773.9" cy="711.8" r="3"/><circle cx="782.8" cy="700.5" r="3"/><circle cx="791.7" cy="749.4" r="3"/><circle cx="800.6" cy="722.8" r="3"/><circle cx="809.4" cy="791.3" r="3"/><circle cx="818.3" cy="781.0" r="3"/><circle cx="827.2" cy="744.6" r="3"/><circle cx="836.1" cy="623.9" r="3"/><circle cx="845.0" cy="686.3" r="3"/><circle cx="853.9" cy="732.9" r="3"/><circle cx="862.8" cy="738.2" r="3"/><circle cx="871.7" cy="765.7" r="3"/><circle cx="880.6" cy="685.5" r="3"/><circle cx="889.4" cy="744.3" r="3"/><circle cx="898.3" cy="668.4" r="3"/><circle cx="907.2" cy="658.0" r="3"/><circle cx="916.1" cy="783.8" r="3"/><circle cx="925.0" cy="722.9" r="3"/><circle cx="933.9" cy="716.8" r="3"/><circle cx="942.8" cy="706.7" r="3"/><circle cx="951.7" cy="628.5" r="3"/><circle cx="960.6" cy="727.2" r="3"/><circle cx="969.4" cy="706.9" r="3"/><circle cx="978.3" cy="700.9" r="3"/><circle cx="987.2" cy="766.5" r="3"/><circle cx="996.1" cy="745.4" r="3"/><circle cx="1005.0" cy="678.3" r="3"/><circle cx="1013.9" cy="688.6" r="3"/><circle cx="1022.8" cy="697.7" r="3"/><circle cx="1031.7" cy="739.0" r="3"/><circle cx="1040.6" cy="765.0" r="3"/><circle cx="1049.4" cy="793.2" r="3"/><circle cx="1058.3" cy="760.4" r="3"/><circle cx="1067.2" cy="761.1" r="3"/><circle cx="1076.1" cy="774.1" r="3"/><circle cx="1085.0" cy="683.7" r="3"/><circle cx="1093.9" cy="704.9" r="3"/><circle cx="1102.8" cy="750.8" r="3"/><circle cx="1111.7" cy="736.2" r="3"/><circle cx="1120.6" cy="755.0" r="3"/><circle cx="1129.4" cy="725.4" r="3"/><circle cx="1138.3" cy="721.7" r="3"/><circle cx="1147.2" cy="735.5" r="3"/><circle cx="1156.1" cy="707.2" r="3"/><circle cx="1165.0" cy="746.9" r="3"/><circle cx="1173.9" cy="765.3" r="3"/></g>
<polyline points="160.6,668.2 169.4,748.9 178.3,757.3 187.2,667.6 196.1,736.2 205.0,656.8 213.9,628.2 222.8,750.1 231.7,680.9 240.6,731.0 249.4,700.0 258.3,741.0 267.2,758.6 276.1,722.0 285.0,769.1 293.9,672.5 302.8,756.1 311.7,733.6 320.6,674.5 329.4,756.6 338.3,771.5 347.2,766.5 356.1,748.9 365.0,704.3 373.9,771.1 382.8,738.2 391.7,672.1 400.6,736.4 409.4,773.4 418.3,784.8 427.2,693.9 436.1,735.5 445.0,687.5 453.9,687.8 462.8,775.2 471.7,658.5 480.6,685.0 489.4,701.9 498.3,758.9 507.2,747.9 516.1,636.6 525.0,790.9 533.9,725.2 542.8,777.2 551.7,785.9 560.6,531.2 569.4,766.8 578.3,739.0 587.2,772.2 596.1,741.0 605.0,722.8 613.9,793.7 622.8,665.3 631.7,622.1 640.6,700.3 649.4,768.3 658.3,727.7 667.2,753.1 676.1,715.3 685.0,769.9 693.9,655.7 702.8,731.0 711.7,735.5 720.6,784.1 729.4,792.0 738.3,702.0 747.2,747.1 756.1,683.7 765.0,722.9 773.9,766.0 782.8,755.8 791.7,753.2 800.6,766.8 809.4,728.3 818.3,721.6 827.2,732.9 836.1,766.8 845.0,736.7 853.9,757.8 862.8,754.6 871.7,782.5 880.6,641.7 889.4,725.2 898.3,745.1 907.2,734.4 916.1,756.9 925.0,779.5 933.9,797.1 942.8,644.2 951.7,755.8 960.6,783.0 969.4,745.6 978.3,739.8 987.2,721.9 996.1,763.4 1005.0,715.9 1013.9,690.4 1022.8,779.8 1031.7,736.7 1040.6,767.7 1049.4,700.8 1058.3,769.6 1067.2,700.5 1076.1,734.4 1085.0,759.6 1093.9,771.8 1102.8,794.3 1111.7,750.0 1120.6,732.9 1129.4,741.3 1138.3,687.0 1147.2,746.2 1156.1,754.3 1165.0,732.4 1173.9,757.6" fill="none" stroke="#ef553b" stroke-width="2" stroke-linejoin="round"/>
<g fill="#ef553b"><circle cx="160.6" cy="668.2" r="3"/><circle cx="169.4" cy="748.9" r="3"/><circle cx="178.3" cy="757.3" r="3"/><circle cx="187.2" cy="667.6" r="3"/><circle cx="196.1" cy="736.2" r="3"/><circle cx="205.0" cy="656.8" r="3"/><circle cx="213.9" cy="628.2" r="3"/><circle cx="222.8" cy="750.1" r="3"/><circle cx="231.7" cy="680.9" r="3"/><circle cx="240.6" cy="731.0" r="3"/><circle cx="249.4" cy="700.0" r="3"/><circle cx="258.3" cy="741.0" r="3"/><circle cx="267.2" cy="758.6" r="3"/><circle cx="276.1" cy="722.0" r="3"/><circle cx="285.0" cy="769.1" r="3"/><circle cx="293.9" cy="672.5" r="3"/><circle cx="302.8" cy="756.1" r="3"/><circle cx="311.7" cy="733.6" r="3"/><circle cx="320.6" cy="674.5" r="3"/><circle cx="329.4" cy="756.6" r="3"/><circle cx="338.3" cy="771.5" r="3"/><circle cx="347.2" cy="766.5" r="3"/><circle cx="356.1" cy="748.9" r="3"/><circle cx="365.0" cy="704.3" r="3"/><circle cx="373.9" cy="771.1" r="3"/><circle cx="382.8" cy="738.2" r="3"/><circle cx="391.7" cy="672.1" r="3"/><circle cx="400.6" cy="736.4" r="3"/><circle cx="409.4" cy="773.4" r="3"/><circle cx="418.3" cy="784.8" r="3"/><circle cx="427.2" cy="693.9" r="3"/><circle cx="436.1" cy="735.5" r="3"/><circle cx="445.0" cy="687.5" r="3"/><circle cx="453.9" cy="687.8" r="3"/><circle cx="462.8" cy="775.2" r="3"/><circle cx="471.7" cy="658.5" r="3"/><circle cx="480.6" cy="685.0" r="3"/><circle cx="489.4" cy="701.9" r="3"/><circle cx="498.3" cy="758.9" r="3"/><circle cx="507.2" cy="747.9" r="3"/><circle cx="516.1" cy="636.6" r="3"/><circle cx="525.0" cy="790.9" r="3"/><circle cx="533.9" cy="725.2" r="3"/><circle cx="542.8" cy="777.2" r="3"/><circle cx="551.7" cy="785.9" r="3"/><circle cx="560.6" cy="531.2" r="3"/><circle cx="569.4" cy="766.8" r="3"/><circle cx="578.3" cy="739.0" r="3"/><circle cx="587.2" cy="772.2" r="3"/><circle cx="596.1" cy="741.0" r="3"/><circle cx="605.0" cy="722.8" r="3"/><circle cx="613.9" cy="793.7" r="3"/><circle cx="622.8" cy="665.3" r="3"/><circle cx="631.7" cy="622.1" r="3"/><circle cx="640.6" cy="700.3" r="3"/><circle cx="649.4" cy="768.3" r="3"/><circle cx="658.3" cy="727.7" r="3"/><circle cx="667.2" cy="753.1" r="3"/><circle cx="676.1" cy="715.3" r="3"/><circle cx="685.0" cy="769.9" r="3"/><circle cx="693.9" cy="655.7" r="3"/><circle cx="702.8" cy="731.0" r="3"/><circle cx="711.7" cy="735.5" r="3"/><circle cx="720.6" cy="784.1" r="3"/><circle cx="729.4" cy="792.0" r="3"/><circle cx="738.3" cy="702.0" r="3"/><circle cx="747.2" cy="747.1" r="3"/><circle cx="756.1" cy="683.7" r="3"/><circle cx="765.0" cy="722.9" r="3"/><circle cx="773.9" cy="766.0" r="3"/><circle cx="782.8" cy="755.8" r="3"/><circle cx="791.7" cy="753.2" r="3"/><circle cx="800.6" cy="766.8" r="3"/><circle cx="809.4" cy="728.3" r="3"/><circle cx="818.3" cy="721.6" r="3"/><circle cx="827.2" cy="732.9" r="3"/><circle cx="836.1" cy="766.8" r="3"/><circle cx="845.0" cy="736.7" r="3"/><circle cx="853.9" cy="757.8" r="3"/><circle cx="862.8" cy="754.6" r="3"/><circle cx="871.7" cy="782.5" r="3"/><circle cx="880.6" cy="641.7" r="3"/><circle cx="889.4" cy="725.2" r="3"/><circle cx="898.3" cy="745.1" r="3"/><circle cx="907.2" cy="734.4" r="3"/><circle cx="916.1" cy="756.9" r="3"/><circle cx="925.0" cy="779.5" r="3"/><circle cx="933.9" cy="797.1" r="3"/><circle cx="942.8" cy="644.2" r="3"/><circle cx="951.7" cy="755.8" r="3"/><circle cx="960.6" cy="783.0" r="3"/><circle cx="969.4" cy="745.6" r="3"/><circle cx="978.3" cy="739.8" r="3"/><circle cx="987.2" cy="721.9" r="3"/><circle cx="996.1" cy="763.4" r="3"/><circle cx="1005.0" cy="715.9" r="3"/><circle cx="1013.9" cy="690.4" r="3"/><circle cx="1022.8" cy="779.8" r="3"/><circle cx="1031.7" cy="736.7" r="3"/><circle cx="1040.6" cy="767.7" r="3"/><circle cx="1049.4" cy="700.8" r="3"/><circle cx="1058.3" cy="769.6" r="3"/><circle cx="1067.2" cy="700.5" r="3"/><circle cx="1076.1" cy="734.4" r="3"/><circle cx="1085.0" cy="759.6" r="3"/><circle cx="1093.9" cy="771.8" r="3"/><circle cx="1102.8" cy="794.3" r="3"/><circle cx="1111.7" cy="750.0" r="3"/><circle cx="1120.6" cy="732.9" r="3"/><circle cx="1129.4" cy="741.3" r="3"/><circle cx="1138.3" cy="687.0" r="3"/><circle cx="1147.2" cy="746.2" r="3"/><circle cx="1156.1" cy="754.3" r="3"/><circle cx="1165.0" cy="732.4" r="3"/><circle cx="1173.9" cy="757.6" r="3"/></g>
<polyline points="160.6,693.5 169.4,759.9 178.3,669.2 187.2,756.6 196.1,743.9 205.0,605.7 213.9,757.8 222.8,721.9 231.7,761.9 240.6,630.0 249.4,757.6 258.3,740.8 267.2,728.4 276.1,749.7 285.0,711.2 293.9,764.2 302.8,539.6 311.7,706.9 320.6,741.7 329.4,756.6 338.3,698.2 347.2,729.4 356.1,769.2 365.0,670.2 373.9,691.6 382.8,758.1 391.7,748.5 400.6,712.9 409.4,681.4 418.3,771.1 427.2,797.5 436.1,655.7 445.0,741.0 453.9,767.0 462.8,770.6 471.7,789.0 480.6,757.8 489.4,749.7 498.3,788.2 507.2,544.2 516.1,752.0 525.0,749.7 533.9,744.6 542.8,733.9 551.7,714.4 560.6,767.3 569.4,704.8 578.3,753.2 587.2,733.6 596.1,716.8 605.0,774.9 613.9,686.6 622.8,743.6 631.7,744.6 640.6,737.2 649.4,727.7 658.3,771.8 667.2,749.2 676.1,767.3 685.0,764.5 693.9,658.8 702.8,718.5 711.7,707.7 720.6,769.1 729.4,785.6 738.3,762.4 747.2,690.6 756.1,691.6 765.0,719.1 773.9,735.2 782.8,656.5 791.7,757.8 800.6,712.2 809.4,733.9 818.3,731.0 827.2,638.1 836.1,751.2 845.0,635.8 853.9,746.6 862.8,723.7 871.7,790.2 880.6,752.3 889.4,687.8 898.3,725.7 907.2,745.4 916.1,774.1 925.0,798.6 933.9,747.1 942.8,740.5 951.7,654.9 960.6,708.4 969.4,726.6 978.3,765.0 987.2,774.1 996.1,761.9 1005.0,759.6 1013.9,734.9 1022.8,598.9 1031.7,707.7 1040.6,703.4 1049.4,739.0 1058.3,685.0 1067.2,761.9 1076.1,778.3 1085.0,725.7 1093.9,673.6 1102.8,710.3 1111.7,765.0 1120.6,773.8 1129.4,783.0 1138.3,719.4 1147.2,748.0 1156.1,733.2 1165.0,714.4 1173.9,783.2" fill="none" stroke="#00cc96" stroke-width="2" stroke-linejoin="round"/>
<g fill="#00cc96"><circle cx="160.6" cy="693.5" r="3"/><circle cx="169.4" cy="759.9" r="3"/><circle cx="178.3" cy="669.2" r="3"/><circle cx="187.2" cy="756.6" r="3"/><circle cx="196.1" cy="743.9" r="3"/><circle cx="205.0" cy="605.7" r="3"/><circle cx="213.9" cy="757.8" r="3"/><circle cx="222.8" cy="721.9" r="3"/><circle cx="231.7" cy="761.9" r="3"/><circle cx="240.6" cy="630.0" r="3"/><circle cx="249.4" cy="757.6" r="3"/><circle cx="258.3" cy="740.8" r="3"/><circle cx="267.2" cy="728.4" r="3"/><circle cx="276.1" cy="749.7" r="3"/><circle cx="285.0" cy="711.2" r="3"/><circle cx="293.9" cy="764.2" r="3"/><circle cx="302.8" cy="539.6" r="3"/><circle cx="311.7" cy="706.9" r="3"/><circle cx="320.6" cy="741.7" r="3"/><circle cx="329.4" cy="756.6" r="3"/><circle cx="338.3" cy="698.2" r="3"/><circle cx="347.2" cy="729.4" r="3"/><circle cx="356.1" cy="769.2" r="3"/><circle cx="365.0" cy="670.2" r="3"/><circle cx="373.9" cy="691.6" r="3"/><circle cx="382.8" cy="758.1" r="3"/><circle cx="391.7" cy="748.5" r="3"/><circle cx="400.6" cy="712.9" r="3"/><circle cx="409.4" cy="681.4" r="3"/><circle cx="418.3" cy="771.1" r="3"/><circle cx="427.2" cy="797.5" r="3"/><circle cx="436.1" cy="655.7" r="3"/><circle cx="445.0" cy="741.0" r="3"/><circle cx="453.9" cy="767.0" r="3"/><circle cx="462.8" cy="770.6" r="3"/><circle cx="471.7" cy="789.0" r="3"/><circle cx="480.6" cy="757.8" r="3"/><circle cx="489.4" cy="749.7" r="3"/><circle cx="498.3" cy="788.2" r="3"/><circle cx="507.2" cy="544.2" r="3"/><circle cx="516.1" cy="752.0" r="3"/><circle cx="525.0" cy="749.7" r="3"/><circle cx="533.9" cy="744.6" r="3"/><circle cx="542.8" cy="733.9" r="3"/><circle cx="551.7" cy="714.4" r="3"/><circle cx="560.6" cy="767.3" r="3"/><circle cx="569.4" cy="704.8" r="3"/><circle cx="578.3" cy="753.2" r="3"/><circle cx="587.2" cy="733.6" r="3"/><circle cx="596.1" cy="716.8" r="3"/><circle cx="605.0" cy="774.9" r="3"/><circle cx="613.9" cy="686.6" r="3"/><circle cx="622.8" cy="743.6" r="3"/><circle cx="631.7" cy="744.6" r="3"/><circle cx="640.6" cy="737.2" r="3"/><circle cx="649.4" cy="727.7" r="3"/><circle cx="658.3" cy="771.8" r="3"/><circle cx="667.2" cy="749.2" r="3"/><circle cx="676.1" cy="767.3" r="3"/><circle cx="685.0" cy="764.5" r="3"/><circle cx="693.9" cy="658.8" r="3"/><circle cx="702.8" cy="718.5" r="3"/><circle cx="711.7" cy="707.7" r="3"/><circle cx="720.6" cy="769.1" r="3"/><circle cx="729.4" cy="785.6" r="3"/><circle cx="738.3" cy="762.4" r="3"/><circle cx="747.2" cy="690.6" r="3"/><circle cx="756.1" cy="691.6" r="3"/><circle cx="765.0" cy="719.1" r="3"/><circle cx="773.9" cy="735.2" r="3"/><circle cx="782.8" cy="656.5" r="3"/><circle cx="791.7" cy="757.8" r="3"/><circle cx="800.6" cy="712.2" r="3"/><circle cx="809.4" cy="733.9" r="3"/><circle cx="818.3" cy="731.0" r="3"/><circle cx="827.2" cy="638.1" r="3"/><circle cx="836.1" cy="751.2" r="3"/><circle cx="845.0" cy="635.8" r="3"/><circle cx="853.9" cy="746.6" r="3"/><circle cx="862.8" cy="723.7" r="3"/><circle cx="871.7" cy="790.2" r="3"/><circle cx="880.6" cy="752.3" r="3"/><circle cx="889.4" cy="687.8" r="3"/><circle cx="898.3" cy="725.7" r="3"/><circle cx="907.2" cy="745.4" r="3"/><circle cx="916.1" cy="774.1" r="3"/><circle cx="925.0" cy="798.6" r="3"/><circle cx="933.9" cy="747.1" r="3"/><circle cx="942.8" cy="740.5" r="3"/><circle cx="951.7" cy="654.9" r="3"/><circle cx="960.6" cy="708.4" r="3"/><circle cx="969.4" cy="726.6" r="3"/><circle cx="978.3" cy="765.0" r="3"/><circle cx="987.2" cy="774.1" r="3"/><circle cx="996.1" cy="761.9" r="3"/><circle cx="1005.0" cy="759.6" r="3"/><circle cx="1013.9" cy="734.9" r="3"/><circle cx="1022.8" cy="598.9" r="3"/><circle cx="1031.7" cy="707.7" r="3"/><circle cx="1040.6" cy="703.4" r="3"/><circle cx="1049.4" cy="739.0" r="3"/><circle cx="1058.3" cy="685.0" r="3"/><circle cx="1067.2" cy="761.9" r="3"/><circle cx="1076.1" cy="778.3" r="3"/><circle cx="1085.0" cy="725.7" r="3"/><circle cx="1093.9" cy="673.6" r="3"/><circle cx="1102.8" cy="710.3" r="3"/><circle cx="1111.7" cy="765.0" r="3"/><circle cx="1120.6" cy="773.8" r="3"/><circle cx="1129.4" cy="783.0" r="3"/><circle cx="1138.3" cy="719.4" r="3"/><circle cx="1147.2" cy="748.0" r="3"/><circle cx="1156.1" cy="733.2" r="3"/><circle cx="1165.0" cy="714.4" r="3"/><circle cx="1173.9" cy="783.2" r="3"/></g>
</g>
<text x="125.0" y="877.2" text-anchor="middle" class="tk">0</text>
<text x="178.3" y="877.2" text-anchor="middle" class="tk">1</text>
<text x="231.7" y="877.2" text-anchor="middle" class="tk">2</text>
<text x="285.0" y="877.2" text-anchor="middle" class="tk">3</text>
<text x="338.3" y="877.2" text-anchor="middle" class="tk">4</text>
<text x="391.7" y="877.2" text-anchor="middle" class="tk">5</text>
<text x="445.0" y="877.2" text-anchor="middle" class="tk">6</text>
<text x="498.3" y="877.2" text-anchor="middle" class="tk">7</text>
<text x="551.7" y="877.2" text-anchor="middle" class="tk">8</text>
<text x="605.0" y="877.2" text-anchor="middle" class="tk">9</text>
<text x="658.3" y="877.2" text-anchor="middle" class="tk">10</text>
<text x="711.7" y="877.2" text-anchor="middle" class="tk">11</text>
<text x="765.0" y="877.2" text-anchor="middle" class="tk">12</text>
<text x="818.3" y="877.2" text-anchor="middle" class="tk">13</text>
<text x="871.7" y="877.2" text-anchor="middle" class="tk">14</text>
<text x="925.0" y="877.2" text-anchor="middle" class="tk">15</text>
<text x="978.3" y="877.2" text-anchor="middle" class="tk">16</text>
<text x="1031.7" y="877.2" text-anchor="middle" class="tk">17</text>
<text x="1085.0" y="877.2" text-anchor="middle" class="tk">18</text>
<text x="1138.3" y="877.2" text-anchor="middle" class="tk">19</text>
<text x="1191.7" y="877.2" text-anchor="middle" class="tk">20</text>
<text x="124" y="868.0" text-anchor="end" class="tk">0</text>
<text x="124" y="814.8" text-anchor="end" class="tk">2k</text>
<text x="124" y="761.9" text-anchor="end" class="tk">4k</text>
<text x="124" y="709.1" text-anchor="end" class="tk">6k</text>
<text x="124" y="656.2" text-anchor="end" class="tk">8k</text>
<text x="124" y="603.3" text-anchor="end" class="tk">10k</text>
<text x="583" y="905" class="ax" textLength="192" lengthAdjust="spacing">relative_timestamp(in minutes)</text>
<text transform="translate(80.6,786.3) rotate(-90)" class="ax" textLength="114" lengthAdjust="spacing">insert_latency_avg</text>
<text x="594.65" y="533" class="tt" textLength="195.3" lengthAdjust="spacing">insert_latency_avg</text>
<line x1="1260" x2="1290" y1="608.5" y2="608.5" stroke="#636efa" stroke-width="2"/>
<circle cx="1275" cy="608.5" r="3" fill="#636efa"/>
<text x="1295" y="612.7" class="tk">run 1</text>
<line x1="1260" x2="1290" y1="627.5" y2="627.5" stroke="#ef553b" stroke-width="2"/>
<circle cx="1275" cy="627.5" r="3" fill="#ef553b"/>
<text x="1295" y="631.7" class="tk">run 2</text>
<line x1="1260" x2="1290" y1="646.5" y2="646.5" stroke="#00cc96" stroke-width="2"/>
<circle cx="1275" cy="646.5" r="3" fill="#00cc96"/>
<text x="1295" y="650.7" class="tk">run 3</text>
<circle cx="1561.2" cy="103.8" r="33.4" fill="#4e4d62"/>
<circle cx="1561.2" cy="222.8" r="33.4" fill="#4e4d62"/>
<circle cx="1561.2" cy="341.8" r="33.4" fill="#4e4d62"/>
<circle cx="1561.2" cy="460.8" r="33.4" fill="#4e4d62"/>
<circle cx="1561.2" cy="579.8" r="33.4" fill="#5eaffb"/>
<circle cx="1561.2" cy="698.8" r="33.4" fill="#4e4d62"/>
<rect x="1540.3" y="87.4" width="42.9" height="34.2" fill="none" stroke="#5eaffb" stroke-width="1.7"/>
<line x1="1551.0" x2="1551.0" y1="87.4" y2="121.6" stroke="#5eaffb" stroke-width="1.1" opacity="0.9"/>
<line x1="1540.3" x2="1583.2" y1="96.0" y2="96.0" stroke="#5eaffb" stroke-width="1.1" opacity="0.9"/>
<line x1="1561.8" x2="1561.8" y1="87.4" y2="121.6" stroke="#5eaffb" stroke-width="1.1" opacity="0.9"/>
<line x1="1540.3" x2="1583.2" y1="104.5" y2="104.5" stroke="#5eaffb" stroke-width="1.1" opacity="0.9"/>
<line x1="1572.5" x2="1572.5" y1="87.4" y2="121.6" stroke="#5eaffb" stroke-width="1.1" opacity="0.9"/>
<line x1="1540.3" x2="1583.2" y1="113.0" y2="113.0" stroke="#5eaffb" stroke-width="1.1" opacity="0.9"/>
<circle cx="1561.2" cy="222.8" r="23.6" fill="none" stroke="#5eaffb" stroke-width="1.8"/>
<path d="M1561.2 205.9L1578.1000000000001 222.8L1561.2 239.70000000000002L1544.3 222.8Z" fill="#5eaffb" stroke="#5eaffb" stroke-width="1" stroke-linejoin="round"/>
<path d="M1561.2 199.0V246.60000000000002M1537.4 222.8H1585.0" stroke="#5eaffb" stroke-width="1.6" fill="none"/>
<rect x="1542.6" y="322.6" width="1.6" height="38.9" fill="#5eaffb"/>
<rect x="1542.6" y="360.1" width="38.4" height="1.4" fill="#5eaffb" opacity="0.65"/>
<rect x="1543.4" y="325.2" width="11.4" height="7.0" fill="#5eaffb"/>
<rect x="1543.4" y="334.0" width="37.9" height="7.0" fill="#5eaffb"/>
<rect x="1543.4" y="343.0" width="21.2" height="7.0" fill="#5eaffb"/>
<rect x="1543.4" y="351.8" width="29.5" height="7.0" fill="#5eaffb"/>
<circle cx="1543.9" cy="444.4" r="2.05" fill="#5eaffb"/>
<circle cx="1549.6" cy="450.2" r="2.05" fill="#5eaffb"/>
<circle cx="1543.9" cy="455.9" r="2.05" fill="#5eaffb"/>
<circle cx="1555.6" cy="455.9" r="2.05" fill="#5eaffb"/>
<circle cx="1549.6" cy="461.4" r="2.05" fill="#5eaffb"/>
<circle cx="1543.9" cy="467.3" r="2.05" fill="#5eaffb"/>
<circle cx="1555.6" cy="467.3" r="2.05" fill="#5eaffb"/>
<circle cx="1549.6" cy="472.7" r="2.05" fill="#5eaffb"/>
<circle cx="1555.6" cy="478.6" r="2.05" fill="#5eaffb"/>
<path d="M1560.8 442.9H1579.1M1560.8 480.4H1579.1M1569.9 442.9V480.4" stroke="#5eaffb" stroke-width="1.5" fill="none" opacity="0.8"/>
<rect x="1560.8" y="449.9" width="18.3" height="24.8" fill="#5eaffb"/>
<path d="M1542.9 560.4V597.6H1580.1" stroke="#52688f" stroke-width="1.3" fill="none"/>
<polyline points="1543.7,586.4 1546.3,565.8 1549.8,585.4 1554.0,561.4 1557.6,577.6 1560.8,568.8 1564.4,592.2 1568.3,570.2 1571.6,586.4 1575.4,562.4 1578.6,585.4" stroke="#52688f" stroke-width="1.1" fill="none" stroke-linejoin="round"/>
<rect x="1542.4" y="680.4" width="37.2" height="37.7" fill="none" stroke="#5eaffb" stroke-width="1.1"/>
<text x="1548.8" y="704.9" text-anchor="middle" class="br" fill="#5eaffb">{</text>
<text x="1573.4" y="704.9" text-anchor="middle" class="br" fill="#5eaffb">}</text>
<text x="1561.5" y="708.8" text-anchor="middle" class="dots" fill="#5eaffb">•••</text>
</svg>
</body></html>
